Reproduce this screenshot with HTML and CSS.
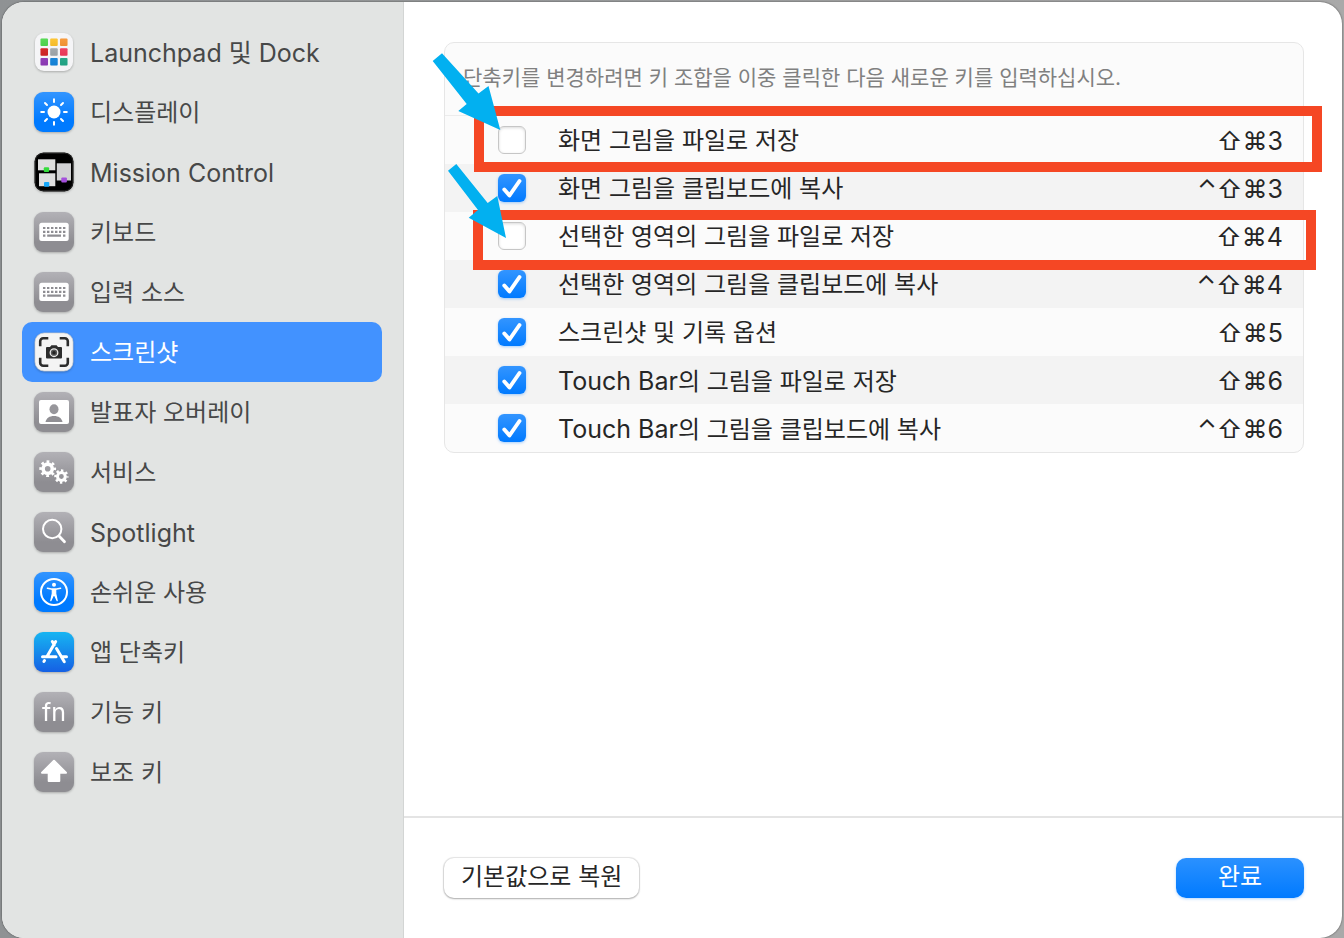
FILE: index.html
```html
<!DOCTYPE html>
<html lang="ko">
    <head>
        <meta charset="UTF-8">
        <meta name="viewport" content="width=device-width, initial-scale=1.0">
        <title>키보드 단축키</title>
        <link rel="stylesheet" href="styles.css">
    </head>
<body>
    <div class="window">
        <nav class="sidebar">
            <a href="#" class="nav-item">
                <svg class="icon" viewBox="0 0 40 40">
                    <defs>
                        <linearGradient id="shade" x1="0" y1="0" x2="0" y2="1">
                            <stop offset="0" stop-color="#fff" stop-opacity="0.15"></stop>
                            <stop offset="1" stop-color="#000" stop-opacity="0.12"></stop>
                        </linearGradient>
                    </defs>
                    <rect x="1" y="1" width="38" height="38" rx="9" fill="#f5f5f7"></rect>
                    <rect x="6.5" y="6.5" width="7.5" height="7.5" rx="1" fill="#3cd43a"></rect>
                    <rect x="16.2" y="6.5" width="7.5" height="7.5" rx="1" fill="#fdbb14"></rect>
                    <rect x="26" y="6.5" width="7.5" height="7.5" rx="1" fill="#f68a1c"></rect>
                    <rect x="6.5" y="16.2" width="7.5" height="7.5" rx="1" fill="#dc1a1a"></rect>
                    <rect x="16.2" y="16.2" width="7.5" height="7.5" rx="1" fill="#a3abb0"></rect>
                    <rect x="26" y="16.2" width="7.5" height="7.5" rx="1" fill="#fb3358"></rect>
                    <rect x="6.5" y="26" width="7.5" height="7.5" rx="1" fill="#9b3fc9"></rect>
                    <rect x="16.2" y="26" width="7.5" height="7.5" rx="1" fill="#1590f0"></rect>
                    <rect x="26" y="26" width="7.5" height="7.5" rx="1" fill="#25b795"></rect>
                    <path fill="url(#shade)" d="M6.5 6.5H14V14H6.5zM16.2 6.5h7.5V14h-7.5zM26 6.5h7.5V14H26zM6.5 16.2H14v7.5H6.5zM16.2 16.2h7.5v7.5h-7.5zM26 16.2h7.5v7.5H26zM6.5 26H14v7.5H6.5zM16.2 26h7.5v7.5h-7.5zM26 26h7.5v7.5H26z"></path>
                </svg>
                <span class="name latin">Launchpad 및 Dock</span>
            </a>
            <a href="#" class="nav-item">
                <svg class="icon blue" viewBox="0 0 40 40" fill="none" stroke="#fff" stroke-width="2" stroke-linecap="round">
                    <circle cx="20" cy="20" r="6.5" fill="#fff" stroke="none"></circle>
                    <path d="M20 7.2v2.8M20 30v2.8M7.2 20H10M30 20h2.8M11 11l2 2M27 27l2 2M11 29l2-2M27 13l2-2"></path>
                </svg>
                <span class="name">디스플레이</span>
            </a>
            <a href="#" class="nav-item">
                <svg class="icon" viewBox="0 0 40 40">
                    <rect x="0.5" y="0.5" width="39" height="39" rx="9" fill="#000"></rect>
                    <rect x="1.3" y="1.3" width="37.4" height="37.4" rx="8" fill="none" stroke="#3a3a3a" stroke-width="0.6"></rect>
                    <rect x="4" y="7.3" width="17.3" height="11" fill="#dedede"></rect>
                    <rect x="5" y="21.3" width="16.3" height="12.9" fill="#dedede"></rect>
                    <rect x="22.8" y="11.3" width="14.2" height="17.2" fill="#d2d2d4"></rect>
                    <rect x="9.8" y="15.2" width="5.3" height="4.8" rx="1" fill="#35dc3c"></rect>
                    <rect x="10" y="30" width="5.3" height="4.8" rx="1" fill="#16a7fa"></rect>
                    <rect x="27.3" y="25.4" width="5.6" height="5" rx="1" fill="#a44fdc"></rect>
                </svg>
                <span class="name latin">Mission Control</span>
            </a>
            <a href="#" class="nav-item">
                <svg class="icon gray" viewBox="0 0 40 40">
                    <rect x="5.3" y="10.8" width="29.4" height="18.2" rx="2.5" fill="#fff"></rect>
                    <g stroke="#8e8d92" stroke-width="2.2">
                        <path stroke-dasharray="2.4 1.6" d="M9 16h22.4M9 19.8h22.4"></path>
                        <path d="M9 23.7h2.4M13.2 23.7h13.8M29 23.7h2.4"></path>
                    </g>
                </svg>
                <span class="name">키보드</span>
            </a>
            <a href="#" class="nav-item">
                <svg class="icon gray" viewBox="0 0 40 40">
                    <rect x="5.3" y="10.8" width="29.4" height="18.2" rx="2.5" fill="#fff"></rect>
                    <g stroke="#8e8d92" stroke-width="2.2">
                        <path stroke-dasharray="2.4 1.6" d="M9 16h22.4M9 19.8h22.4"></path>
                        <path d="M9 23.7h2.4M13.2 23.7h13.8M29 23.7h2.4"></path>
                    </g>
                </svg>
                <span class="name">입력 소스</span>
            </a>
            <a href="#" class="nav-item active" aria-current="page">
                <svg class="icon" viewBox="0 0 40 40">
                    <rect x="1" y="1" width="38" height="38" rx="9" fill="#f4f4f4" stroke="#d0d0d0" stroke-width="0.7"></rect>
                    <path d="M6.2 14.3V9.2a3 3 0 0 1 3-3h5.1M25.7 6.2h5.1a3 3 0 0 1 3 3v5.1M33.8 25.7v5.1a3 3 0 0 1-3 3h-5.1M14.3 33.8H9.2a3 3 0 0 1-3-3v-5.1" fill="none" stroke="#2c2c2c" stroke-width="2.6"></path>
                    <path d="M13 15h3l1.4-1.8h5.2L24 15h3q1 0 1 1v9.5q0 1-1 1H13q-1 0-1-1V16q0-1 1-1z" fill="#2c2c2c"></path>
                    <circle cx="20" cy="20.7" r="3.8" fill="#555" stroke="#e8e8e8" stroke-width="1.3"></circle>
                    <circle cx="20" cy="20.7" r="1.7" fill="#222"></circle>
                </svg>
                <span class="name">스크린샷</span>
            </a>
            <a href="#" class="nav-item">
                <svg class="icon gray" viewBox="0 0 40 40">
                    <rect x="5" y="8" width="30" height="24" rx="2" fill="#fff"></rect>
                    <ellipse cx="20" cy="17.3" rx="4.5" ry="5" fill="#97969b"></ellipse>
                    <path d="M11.5 30c.8-4 4-6 8.500-6s7.700 2 8.500 6z" fill="#908f94"></path>
                </svg>
                <span class="name">발표자 오버레이</span>
            </a>
            <a href="#" class="nav-item">
                <svg class="icon gray" viewBox="0 0 40 40" fill="none" stroke="#fff">
                    <circle cx="13.7" cy="16.7" r="4.6" stroke-width="3.6"></circle>
                    <circle cx="13.7" cy="16.7" r="7" stroke-width="2.8" stroke-dasharray="2.75 2.75" stroke-dashoffset="1.37"></circle>
                    <circle cx="27.4" cy="24.5" r="3.9" stroke-width="3"></circle>
                    <circle cx="27.4" cy="24.5" r="5.9" stroke-width="2.5" stroke-dasharray="2.32 2.32" stroke-dashoffset="1.16"></circle>
                </svg>
                <span class="name">서비스</span>
            </a>
            <a href="#" class="nav-item">
                <svg class="icon gray" viewBox="0 0 40 40" fill="none" stroke="#fff" stroke-linecap="round">
                    <circle cx="18.2" cy="17" r="9.2" stroke-width="2"></circle>
                    <path d="M25 24l5.500 5.800" stroke-width="2.8"></path>
                </svg>
                <span class="name latin">Spotlight</span>
            </a>
            <a href="#" class="nav-item">
                <svg class="icon blue" viewBox="0 0 40 40" fill="none" stroke="#fff" stroke-linecap="round" stroke-linejoin="round">
                    <circle cx="20" cy="20" r="13" stroke-width="2"></circle>
                    <circle cx="20" cy="12.8" r="2" fill="#fff" stroke="none"></circle>
                    <path d="M13.5 16.2l5 1h3l5-1" stroke-width="1.6"></path>
                    <path d="M18.3 17h3.4v4.5l1.5 7.2-3.2-6.7-3.2 6.7 1.5-7.2z" fill="#fff" stroke-width="1.2"></path>
                </svg>
                <span class="name">손쉬운 사용</span>
            </a>
            <a href="#" class="nav-item">
                <svg class="icon store" viewBox="0 0 40 40" fill="none" stroke="#fff" stroke-width="3" stroke-linecap="round">
                    <path d="M21.7 9.5l-8.7 15M10.5 28.5l-.6 1M18.3 9.5l2 3.3M22.5 16.5l7.8 13.3M8.5 24.7h13.5M28.5 24.7h4"></path>
                </svg>
                <span class="name">앱 단축키</span>
            </a>
            <a href="#" class="nav-item">
                <span class="icon gray fn" aria-hidden="true">fn</span>
                <span class="name">기능 키</span>
            </a>
            <a href="#" class="nav-item">
                <svg class="icon gray" viewBox="0 0 40 40">
                    <path d="M20 8.800L32 20.800H25.300V29H14.700V20.800H8z" fill="#fff" stroke="#fff" stroke-width="2" stroke-linejoin="round"></path>
                </svg>
                <span class="name">보조 키</span>
            </a>
        </nav>

        <main class="content">
            <section class="panel">
                <div class="card">
                    <p class="hint">단축키를 변경하려면 키 조합을 이중 클릭한 다음 새로운 키를 입력하십시오.</p>
                    <table class="shortcuts">
                        <tbody>
                            <tr>
                                <td class="check"><input type="checkbox" id="key1"></td>
                                <td class="action"><label for="key1">화면 그림을 파일로 저장</label></td>
                                <td class="keys">⇧⌘3
                                    <span class="highlight first"></span>
                                    <svg class="arrow first" width="70" height="80" viewBox="0 0 70 80"><path d="M.7 9L10 1.300 46.500 41.500 56.500 34 68.300 78 26.300 59 34.700 52z"></path></svg>
                                </td>
                            </tr>
                            <tr>
                                <td class="check"><input type="checkbox" id="key2" checked></td>
                                <td class="action"><label for="key2">화면 그림을 클립보드에 복사</label></td>
                                <td class="keys">⌃⇧⌘3</td>
                            </tr>
                            <tr>
                                <td class="check"><input type="checkbox" id="key3"></td>
                                <td class="action"><label for="key3">선택한 영역의 그림을 파일로 저장</label></td>
                                <td class="keys">⇧⌘4
                                    <span class="highlight second"></span>
                                    <svg class="arrow second" width="70" height="80" viewBox="0 0 70 80"><path d="M1 7.700L9.300 1 40.700 40 50.300 33 59 75 21.700 54.700 31 47z"></path></svg>
                                </td>
                            </tr>
                            <tr>
                                <td class="check"><input type="checkbox" id="key4" checked></td>
                                <td class="action"><label for="key4">선택한 영역의 그림을 클립보드에 복사</label></td>
                                <td class="keys">⌃⇧⌘4</td>
                            </tr>
                            <tr>
                                <td class="check"><input type="checkbox" id="key5" checked></td>
                                <td class="action"><label for="key5">스크린샷 및 기록 옵션</label></td>
                                <td class="keys">⇧⌘5</td>
                            </tr>
                            <tr>
                                <td class="check"><input type="checkbox" id="key6" checked></td>
                                <td class="action"><label for="key6"><span class="latin">Touch Bar</span>의 그림을 파일로 저장</label></td>
                                <td class="keys">⇧⌘6</td>
                            </tr>
                            <tr>
                                <td class="check"><input type="checkbox" id="key7" checked></td>
                                <td class="action"><label for="key7"><span class="latin">Touch Bar</span>의 그림을 클립보드에 복사</label></td>
                                <td class="keys">⌃⇧⌘6</td>
                            </tr>
                        </tbody>
                    </table>
                </div>
            </section>
            <footer class="footer">
                <button type="button" class="button">기본값으로 복원</button>
                <button type="button" class="button primary">완료</button>
            </footer>
        </main>
    </div>
</body>
</html>
```
FILE: styles.css
```css
* {
    margin: 0;
    padding: 0;
    box-sizing: border-box;
}

body {
    background: linear-gradient(to right, #8f9294, #a9a9a9);
    min-height: 100vh;
    padding: 2px 2px 0;
    display: flex;
    font-family: Inter, "Noto Sans CJK KR", sans-serif;
    font-size: 24px;
    line-height: 36px;
    color: #262626;
}

.window {
    flex: 1;
    display: flex;
    background-color: white;
    border-radius: 22px;
    box-shadow: 0 0 2px rgba(0, 0, 0, 0.6);
    overflow: hidden;
}

.sidebar {
    width: 402px;
    flex-shrink: 0;
    padding: 20px 21px 20px 20px;
    background-color: #e2e4e3;
    border-right: 1px solid #d3d5d4;
}

.nav-item {
    display: flex;
    align-items: center;
    gap: 16px;
    height: 60px;
    padding: 0 12px;
    border-radius: 10px;
    color: #474848;
    text-decoration: none;
}

.nav-item.active {
    background-color: #4292ff;
    color: white;
}

.name {
    padding-top: 2px;
}

.latin {
    font-size: 25px;
}

.icon {
    width: 40px;
    height: 40px;
    flex-shrink: 0;
    border-radius: 9px;
    filter: drop-shadow(0 1px 1px rgba(0, 0, 0, 0.25));
}

.blue {
    background: linear-gradient(#3395ff, #007aff 70%);
}

.gray {
    background: linear-gradient(#b2b1b6, #8e8d92 75%);
}

.store {
    background: linear-gradient(#17b5f2, #1560e4);
}

.fn {
    color: white;
    font-size: 25px;
    line-height: 40px;
    text-align: center;
}

.content {
    flex: 1;
    display: flex;
    flex-direction: column;
}

.panel {
    flex: 1;
    padding: 40px 38px 40px 40px;
}

.card {
    background-color: #fbfbfb;
    border: 1px solid #e6e6e6;
    border-radius: 10px;
}

.hint {
    padding: 17px 18px 19px;
    border-bottom: 1px solid #ececec;
    color: #808080;
    font-size: 21px;
}

.shortcuts {
    width: 100%;
    border-collapse: collapse;
}

.shortcuts tr {
    position: relative;
    height: 48px;
}

.shortcuts tr:nth-child(even) {
    background-color: #f3f3f3;
}

.shortcuts td {
    vertical-align: middle;
}

.shortcuts .check {
    width: 113px;
    padding-left: 53px;
}

.shortcuts .action {
    padding-top: 2px;
}

.shortcuts .keys {
    padding: 2px 20px 0 0;
    font-size: 25px;
    text-align: right;
}

input[type="checkbox"] {
    display: block;
    width: 28px;
    height: 28px;
    appearance: none;
    background-color: white;
    border: 1px solid #c6c6c6;
    border-radius: 6px;
    box-shadow: inset 0 1px 3px rgba(0, 0, 0, 0.15);
}

input[type="checkbox"]:checked {
    border: none;
    background: url("data:image/svg+xml,%3Csvg xmlns='http://www.w3.org/2000/svg' viewBox='0 0 28 28'%3E%3Cpath d='M6.300 15.500l5.200 6L21.500 7' fill='none' stroke='white' stroke-width='3.900' stroke-linecap='round' stroke-linejoin='round'/%3E%3C/svg%3E"), linear-gradient(#3395ff, #007aff);
    box-shadow: 0 1px 3px rgba(0, 122, 255, 0.35);
}

/* Callouts on top of the list */
.highlight {
    position: absolute;
    z-index: 2;
    border: 10px solid #f54724;
    pointer-events: none;
}

.highlight.first {
    inset: -10px -19px -8px 29px;
}

.highlight.second {
    inset: -2px -13px -10px 28px;
}

.arrow {
    position: absolute;
    z-index: 3;
    fill: #02b0f0;
    pointer-events: none;
}

.arrow.first {
    top: -64px;
    left: -13px;
}

.arrow.second {
    top: -49px;
    left: 2px;
}

.footer {
    display: flex;
    justify-content: space-between;
    padding: 40px 38px 40px 40px;
    border-top: 2px solid #e4e4e4;
}

.button {
    height: 40px;
    padding: 0 17px 2px;
    background-color: white;
    border: none;
    border-radius: 10px;
    box-shadow: 0 0 1px 1px rgba(0, 0, 0, 0.1), 0 1px 2px rgba(0, 0, 0, 0.25);
    color: #262626;
    font-family: inherit;
    font-size: 24px;
    line-height: 36px;
}

.button.primary {
    min-width: 128px;
    background: linear-gradient(#2b91ff, #007aff);
    box-shadow: 0 1px 3px rgba(0, 122, 255, 0.3);
    color: white;
}
```
